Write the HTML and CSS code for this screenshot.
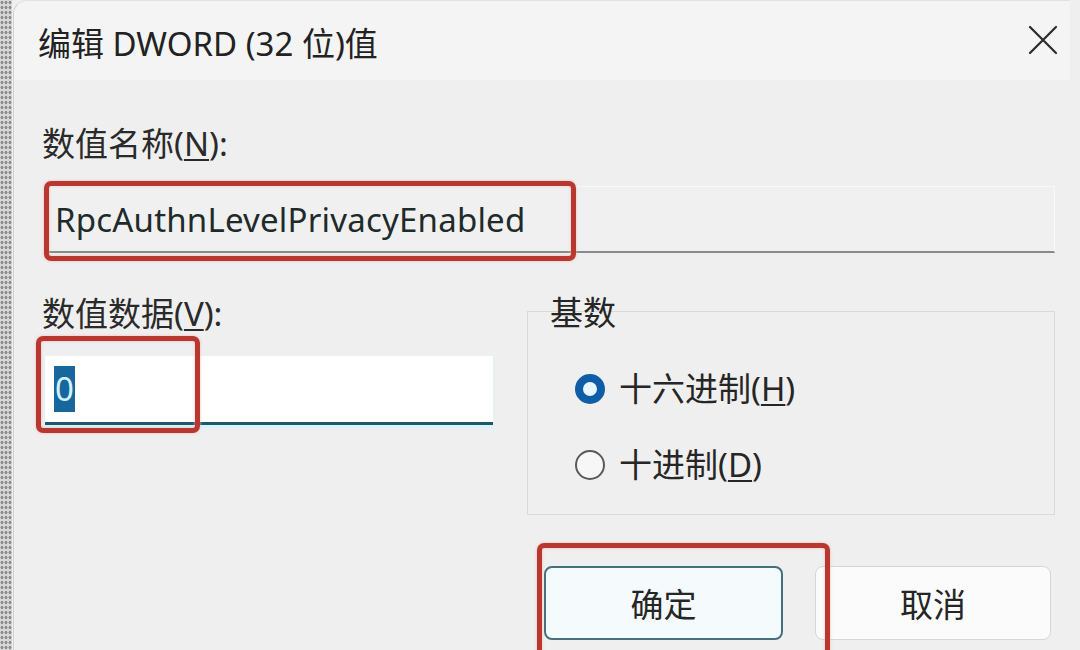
FILE: index.html
```html
<!DOCTYPE html>
<html lang="zh-CN">

<head>
    <meta charset="UTF-8">
    <meta name="viewport" content="width=device-width, initial-scale=1.0">
    <link rel="stylesheet" href="styles.css">
</head>

<body>
    <div class="screen">
        <div class="edge"></div>

        <div class="dialog">
            <!-- Title bar -->
            <div class="titlebar">
                <span class="title">编辑 DWORD (32 位)值</span>
                <span class="close">
                    <svg width="30" height="30" viewBox="0 0 30 30">
                        <path d="M2 2 L28 28 M28 2 L2 28" stroke="#2b2b2b" stroke-width="2.2" stroke-linecap="round" fill="none"/>
                    </svg>
                </span>
            </div>

            <div class="content">
                <div class="field-label">数值名称(<u>N</u>):</div>
                <div class="input name-input">RpcAuthnLevelPrivacyEnabled</div>

                <div class="row">
                    <!-- Left column: value data -->
                    <div class="data-col">
                        <div class="field-label">数值数据(<u>V</u>):</div>
                        <div class="input data-input"><span class="sel">0</span></div>
                    </div>

                    <!-- Right column: base + buttons -->
                    <div class="base-col">
                        <div class="group">
                            <div class="group-title">基数</div>
                            <div class="radio-row first">
                                <span class="radio checked"></span>
                                <span>十六进制(<u>H</u>)</span>
                            </div>
                            <div class="radio-row">
                                <span class="radio"></span>
                                <span>十进制(<u>D</u>)</span>
                            </div>
                        </div>
                        <div class="buttons">
                            <div class="btn primary">确定</div>
                            <div class="btn">取消</div>
                        </div>
                    </div>
                </div>
            </div>
        </div>

        <!-- Red annotation boxes drawn over the dialog -->
        <div class="mark mark-name"></div>
        <div class="mark mark-data"></div>
        <div class="mark mark-ok"></div>
    </div>
</body>

</html>
```

FILE: styles.css
```css
body {
    margin: 0;
    font-family: 'Noto Sans', 'Noto Sans CJK SC', sans-serif;
    color: #262626;
    background-color: #efefef;
}

.screen {
    position: relative;
    width: 1080px;
    height: 650px;
    overflow: hidden;
    display: flex;
    background-color: #efefef;
}

.edge {
    width: 12px;
    flex: none;
    background-color: #d6d6d6;
    background-image: radial-gradient(circle, #8c8c8c 1.2px, transparent 1.8px);
    background-size: 4px 5px;
}

.dialog {
    flex: 1;
    margin-left: 1px;
    margin-right: 10px;
    border-left: 1px solid #d2d2d2;
    border-top: 1px solid #e2e2e2;
    border-top-left-radius: 14px;
    background-color: #efefef;
}

.titlebar {
    height: 79px;
    display: flex;
    align-items: center;
    justify-content: space-between;
    padding: 0 12px 0 24px;
    background-color: #f4f4f4;
    border-top-left-radius: 14px;
}

.title {
    font-size: 33px;
    color: #222;
    margin-top: 2px;
}

.close {
    display: flex;
    margin-top: -2px;
}

.content {
    padding: 46px 15px 0 28px;
}

.field-label {
    font-size: 33px;
    line-height: 36px;
    color: #2a2a2a;
}

.field-label u,
.radio-row u {
    text-decoration-thickness: 2px;
    text-underline-offset: 3px;
}

.input {
    box-sizing: border-box;
    display: flex;
    align-items: center;
    font-size: 33px;
}

.name-input {
    margin: 24px 0 0 4px;
    height: 67px;
    padding-left: 8px;
    background-color: #f0f0f0;
    border: 1px solid #f8f8f8;
    border-bottom: 2px solid #8a8a8a;
    color: #1f2a2a;
    letter-spacing: 0.2px;
}

.row {
    display: grid;
    grid-template-columns: 451px 1fr;
    gap: 34px;
    margin-top: 43px;
}

.data-input {
    margin: 24px 0 0 3px;
    height: 69px;
    padding-left: 9px;
    background-color: #fff;
    border-bottom: 3px solid #1f5868;
    box-shadow: 0 3px 3px #d2f3fb;
}

.sel {
    background-color: #17669c;
    color: #d3f1ff;
    line-height: 46px;
    padding: 0 1px;
}

.group {
    margin-top: 15px;
    height: 204px;
    box-sizing: border-box;
    border: 1px solid #dadada;
    padding: 0 0 0 47px;
}

.group-title {
    font-size: 33px;
    line-height: 36px;
    margin: -17px 0 0 -25px;
}

.radio-row {
    display: flex;
    align-items: center;
    gap: 14px;
    font-size: 33px;
    line-height: 40px;
    margin-top: 36px;
}

.radio-row.first {
    margin-top: 38px;
}

.radio {
    width: 30px;
    height: 30px;
    flex: none;
    box-sizing: border-box;
    border-radius: 50%;
    border: 2px solid #5a5a5a;
    background-color: #f7f7f7;
}

.radio.checked {
    border: 8px solid #0f5da6;
    background-color: #e8f7ff;
}

.buttons {
    display: flex;
    gap: 32px;
    margin: 51px 0 0 17px;
}

.btn {
    box-sizing: border-box;
    width: 236px;
    height: 74px;
    display: flex;
    align-items: center;
    justify-content: center;
    font-size: 33px;
    border-radius: 8px;
    border: 1px solid #d6d6d6;
    background-color: #fbfbfb;
}

.btn.primary {
    width: 239px;
    border: 2px solid #44707e;
    background-color: #f5fbfd;
}

/* Annotation boxes */
.mark {
    position: absolute;
    border: 5px solid #b93731;
    border-radius: 7px;
    box-shadow: 0 0 3px #f3b7b0, inset 0 0 3px #f3b7b0;
}

.mark-name {
    left: 44px;
    top: 181px;
    width: 522px;
    height: 70px;
}

.mark-data {
    left: 36px;
    top: 336px;
    width: 154px;
    height: 87px;
}

.mark-ok {
    left: 537px;
    top: 543px;
    width: 283px;
    height: 120px;
}
```
